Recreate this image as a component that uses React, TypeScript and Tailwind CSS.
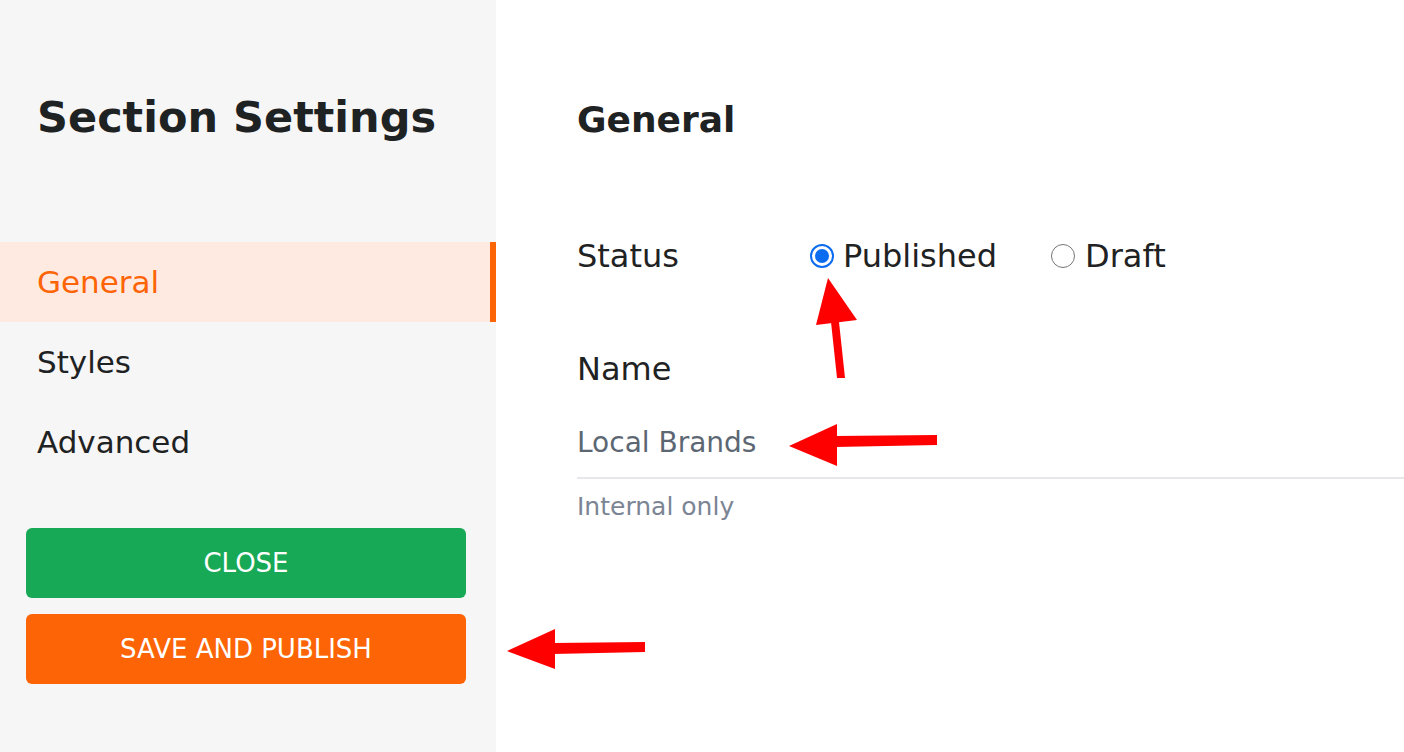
export default function App() {
  const font = { fontFamily: '"DejaVu Sans", "Noto Sans", sans-serif' }

  return (
    <main className="relative flex h-[752px] w-full overflow-hidden bg-white text-[#1f2223]" style={font}>
      {/* sidebar */}
      <aside className="flex w-[496px] shrink-0 flex-col bg-[#f6f6f6]">
        <h1 className="pl-[37px] pt-[89px] text-[43px] font-bold leading-[56px]">Section Settings</h1>

        <nav className="mt-[97px] flex flex-col">
          <div className="flex h-20 items-center border-r-[6px] border-[#fc6405] bg-[#ffeae2] pl-[37px] text-[31px] text-[#fc6405]">
            General
          </div>
          <div className="flex h-20 items-center pl-[37px] text-[31px]">Styles</div>
          <div className="flex h-20 items-center pl-[37px] text-[31px]">Advanced</div>
        </nav>

        <div className="mt-[46px] flex flex-col gap-4 px-[26px]">
          <button className="h-[70px] w-[440px] rounded-md bg-[#18a957] text-[26px] font-medium uppercase text-white">
            Close
          </button>
          <button className="h-[70px] w-[440px] rounded-md bg-[#fc6405] text-[26px] font-medium uppercase text-white">
            Save and publish
          </button>
        </div>
      </aside>

      {/* content */}
      <section className="flex flex-1 flex-col pl-[81px]">
        <h2 className="pt-[96px] text-[36px] font-semibold leading-[48px]">General</h2>

        <div className="mt-[92px] flex h-[40px] items-center text-[32px]">
          <span className="w-[233px] font-medium">Status</span>
          <label className="flex items-center gap-[9px]">
            <span className="flex h-6 w-6 items-center justify-center rounded-full border-2 border-[#0b6cf0]">
              <span className="h-[14px] w-[14px] rounded-full bg-[#0b6cf0]" />
            </span>
            <span>Published</span>
          </label>
          <label className="ml-[54px] flex items-center gap-[10px]">
            <span className="h-6 w-6 rounded-full border-[1.5px] border-[#767676] bg-white" />
            <span>Draft</span>
          </label>
        </div>

        <div className="mt-[73px] flex h-[40px] items-center text-[32px] font-medium">Name</div>

        <div className="mt-[36px] border-b-2 border-[#e5e7eb] pb-[16px] text-[28px] leading-[36px] text-[#5c6773]">
          Local Brands
        </div>
        <div className="mt-[12px] text-[25px] leading-[32px] text-[#7b8594]">Internal only</div>
      </section>

      {/* annotation arrows */}
      <svg className="pointer-events-none absolute inset-0" width="1404" height="752" viewBox="0 0 1404 752">
        <g fill="#ff0000">
          <polygon points="837,378 845,378 839,322 831,322" />
          <polygon points="828,278 857,320 816,325" />
          <polygon points="835,436 937,435 937,445 835,447" />
          <polygon points="789,446 837,424 837,466" />
          <polygon points="553,643 645,642 645,652 553,654" />
          <polygon points="507,651 555,629 555,669" />
        </g>
      </svg>
    </main>
  )
}
